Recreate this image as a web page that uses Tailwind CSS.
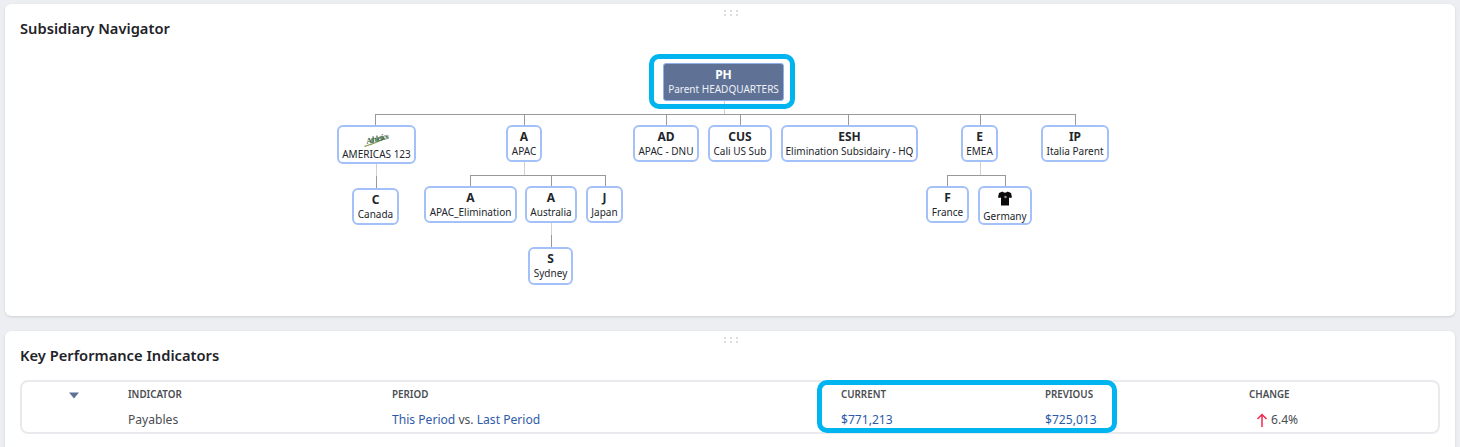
<!DOCTYPE html>
<html lang="en">
<head>
    <meta charset="UTF-8">
    <title>Dashboard</title>
    <script src="https://cdn.jsdelivr.net/npm/@tailwindcss/browser@4"></script>
</head>
<body class="h-[447px] overflow-hidden bg-[#eceef2] font-['Noto_Sans',sans-serif] text-[#1f2329]">
    <div class="flex flex-col gap-[15px] pl-[5px] pr-[5px] pt-[4px]">
        <!-- Subsidiary Navigator -->
        <section class="relative h-[312px] rounded-md bg-white shadow-sm">
            <div class="absolute left-[719px] top-[6px] grid grid-cols-3 gap-x-[4px] gap-y-[2px]">
                <i class="h-[2px] w-[2px] bg-[#dcdddf]"></i><i class="h-[2px] w-[2px] bg-[#dcdddf]"></i><i class="h-[2px] w-[2px] bg-[#dcdddf]"></i>
                <i class="h-[2px] w-[2px] bg-[#dcdddf]"></i><i class="h-[2px] w-[2px] bg-[#dcdddf]"></i><i class="h-[2px] w-[2px] bg-[#dcdddf]"></i>
            </div>
            <h2 class="h-[50px] pl-[15px] pt-[13px] text-[14.7px] leading-[22px] font-semibold">Subsidiary Navigator</h2>

            <!-- org chart, coordinates relative to this canvas -->
            <div class="relative h-[262px] text-center text-[10px] leading-[14px] text-[#22262b]">
                <svg class="absolute left-0 top-0" width="1450" height="262" fill="none">
                    <g stroke="#d0d0d0">
                        <path d="M719.5 47v13M371.5 110v12M519.5 108v13M546.5 169v12M975.5 108v13"/>
                    </g>
                    <g stroke="#999">
                        <path d="M370 60.5h701M370.5 60v11M519.5 60v11M661.5 60v11M735.5 60v11M843.5 60v11M975.5 60v11M1070.5 60v11"/>
                        <path d="M371.5 122v12"/>
                        <path d="M465 121.5h136M465.5 121v11M546.5 121v11M600.5 121v11"/>
                        <path d="M546.5 181v12"/>
                        <path d="M942 121.5h59M942.5 121v11M1000.5 121v11"/>
                    </g>
                </svg>

                <div class="absolute left-[658px] top-[9px] flex h-[38px] w-[121px] flex-col justify-center rounded-[3px] border border-[#8fb0ee] bg-[#5f7296] text-white">
                    <b class="text-[12px] leading-[14px] font-bold">PH</b><span class="text-[#eef1f6]">Parent HEADQUARTERS</span>
                </div>

                <!-- level 1 -->
                <div class="absolute left-[332px] top-[71px] flex h-[39px] w-[79px] flex-col items-center justify-end rounded-[6px] border-2 border-[#a3c0f8] bg-white pb-[1px]">
                    <svg width="28" height="16" viewBox="0 0 28 16">
                        <path d="M1 15 C10 12 19 9 27 4 C21 9.5 11 13 2 16 Z" fill="#8d9a55"/>
                        <text x="3" y="10.5" transform="rotate(-14 14 8)" font-family="Liberation Serif, serif" font-style="italic" font-weight="700" font-size="8.5" textLength="23" fill="#35633f">Athletics</text>
                    </svg>
                    <span>AMERICAS 123</span>
                </div>
                <div class="absolute left-[501px] top-[71px] flex h-[37px] w-[36px] flex-col justify-center rounded-[6px] border-2 border-[#a3c0f8] bg-white"><b class="text-[12px] leading-[14px] font-bold">A</b><span>APAC</span></div>
                <div class="absolute left-[628px] top-[71px] flex h-[37px] w-[66px] flex-col justify-center rounded-[6px] border-2 border-[#a3c0f8] bg-white"><b class="text-[12px] leading-[14px] font-bold">AD</b><span>APAC - DNU</span></div>
                <div class="absolute left-[703px] top-[71px] flex h-[37px] w-[64px] flex-col justify-center rounded-[6px] border-2 border-[#a3c0f8] bg-white"><b class="text-[12px] leading-[14px] font-bold">CUS</b><span>Cali US Sub</span></div>
                <div class="absolute left-[776px] top-[71px] flex h-[37px] w-[137px] flex-col justify-center rounded-[6px] border-2 border-[#a3c0f8] bg-white"><b class="text-[12px] leading-[14px] font-bold">ESH</b><span>Elimination Subsidairy - HQ</span></div>
                <div class="absolute left-[956px] top-[71px] flex h-[37px] w-[37px] flex-col justify-center rounded-[6px] border-2 border-[#a3c0f8] bg-white"><b class="text-[12px] leading-[14px] font-bold">E</b><span>EMEA</span></div>
                <div class="absolute left-[1036px] top-[71px] flex h-[37px] w-[68px] flex-col justify-center rounded-[6px] border-2 border-[#a3c0f8] bg-white"><b class="text-[12px] leading-[14px] font-bold">IP</b><span>Italia Parent</span></div>

                <!-- level 2 -->
                <div class="absolute left-[347px] top-[134px] flex h-[37px] w-[47px] flex-col justify-center rounded-[6px] border-2 border-[#a3c0f8] bg-white"><b class="text-[12px] leading-[14px] font-bold">C</b><span>Canada</span></div>
                <div class="absolute left-[419px] top-[132px] flex h-[37px] w-[93px] flex-col justify-center rounded-[6px] border-2 border-[#a3c0f8] bg-white"><b class="text-[12px] leading-[14px] font-bold">A</b><span>APAC_Elimination</span></div>
                <div class="absolute left-[520px] top-[132px] flex h-[37px] w-[52px] flex-col justify-center rounded-[6px] border-2 border-[#a3c0f8] bg-white"><b class="text-[12px] leading-[14px] font-bold">A</b><span>Australia</span></div>
                <div class="absolute left-[581px] top-[132px] flex h-[37px] w-[37px] flex-col justify-center rounded-[6px] border-2 border-[#a3c0f8] bg-white"><b class="text-[12px] leading-[14px] font-bold">J</b><span>Japan</span></div>
                <div class="absolute left-[921px] top-[132px] flex h-[37px] w-[43px] flex-col justify-center rounded-[6px] border-2 border-[#a3c0f8] bg-white"><b class="text-[12px] leading-[14px] font-bold">F</b><span>France</span></div>
                <div class="absolute left-[973px] top-[132px] flex h-[39px] w-[54px] flex-col items-center justify-end rounded-[6px] border-2 border-[#a3c0f8] bg-white">
                    <svg class="mb-[3px]" width="14" height="15" viewBox="0 0 14 15">
                        <path d="M4.5 0.5 L1 2 L0 6.5 L2.6 7 L3 5.5 L3 14.5 L11 14.5 L11 5.5 L11.4 7 L14 6.5 L13 2 L9.5 0.5 C8.8 2 5.2 2 4.5 0.5 Z" fill="#0a0a0a"/>
                        <circle cx="7.5" cy="6" r="1.3" fill="#8a8a8a"/>
                    </svg>
                    <span>Germany</span>
                </div>

                <!-- level 3 -->
                <div class="absolute left-[523px] top-[193px] flex h-[38px] w-[45px] flex-col justify-center rounded-[6px] border-2 border-[#a3c0f8] bg-white"><b class="text-[12px] leading-[14px] font-bold">S</b><span>Sydney</span></div>

                <!-- highlight round the root node -->
                <div class="absolute left-[644px] top-0 h-[55px] w-[146px] rounded-[10px] border-[5px] border-[#00b4f0]"></div>
            </div>
        </section>

        <!-- Key Performance Indicators -->
        <section class="relative h-[130px] rounded-md bg-white shadow-sm">
            <div class="absolute left-[719px] top-[6px] grid grid-cols-3 gap-x-[4px] gap-y-[2px]">
                <i class="h-[2px] w-[2px] bg-[#dcdddf]"></i><i class="h-[2px] w-[2px] bg-[#dcdddf]"></i><i class="h-[2px] w-[2px] bg-[#dcdddf]"></i>
                <i class="h-[2px] w-[2px] bg-[#dcdddf]"></i><i class="h-[2px] w-[2px] bg-[#dcdddf]"></i><i class="h-[2px] w-[2px] bg-[#dcdddf]"></i>
            </div>
            <h2 class="h-[49px] pl-[15px] pt-[13px] text-[14.7px] leading-[22px] font-semibold">Key Performance Indicators</h2>

            <div class="relative mx-[15px] h-[54px] rounded-lg border-2 border-[#e9eaed]">
                <div class="grid h-full grid-cols-[106px_264px_449px_204px_204px_1fr] text-[12.1px] leading-[17px] text-[#4a4d52]">
                    <div class="flex justify-center pr-[2px] pt-[10px]">
                        <svg width="10" height="7" viewBox="0 0 10 7"><path d="M0 0.5h10L5 6.5z" fill="#5f7296"/></svg>
                    </div>
                    <div class="pt-[5px]">
                        <div class="text-[9.8px] leading-[16px] font-semibold uppercase">Indicator</div>
                        <div class="mt-[8px]">Payables</div>
                    </div>
                    <div class="pt-[5px]">
                        <div class="text-[9.8px] leading-[16px] font-semibold uppercase">Period</div>
                        <div class="mt-[8px]"><a class="text-[#2e5aa8]">This Period</a> vs. <a class="text-[#2e5aa8]">Last Period</a></div>
                    </div>
                    <div class="pt-[5px]">
                        <div class="text-[9.8px] leading-[16px] font-semibold uppercase">Current</div>
                        <div class="mt-[8px] text-[#2e5aa8]">$771,213</div>
                    </div>
                    <div class="pt-[5px]">
                        <div class="text-[9.8px] leading-[16px] font-semibold uppercase">Previous</div>
                        <div class="mt-[8px] text-[#2e5aa8]">$725,013</div>
                    </div>
                    <div class="pt-[5px]">
                        <div class="text-[9.8px] leading-[16px] font-semibold uppercase">Change</div>
                        <div class="mt-[8px] flex items-center gap-[3px] pl-[7px]">
                            <svg width="12" height="14" viewBox="0 0 12 14" fill="none" stroke="#ef2b4b" stroke-width="1.5"><path d="M6 14V1.5M1.5 6L6 1.5L10.5 6"/></svg>
                            <span>6.4%</span>
                        </div>
                    </div>
                </div>
                <!-- highlight round current and previous -->
                <div class="absolute left-[795px] top-[-2px] h-[53px] w-[300px] rounded-[10px] border-[5px] border-[#00b4f0]"></div>
            </div>
        </section>
    </div>
</body>
</html>
